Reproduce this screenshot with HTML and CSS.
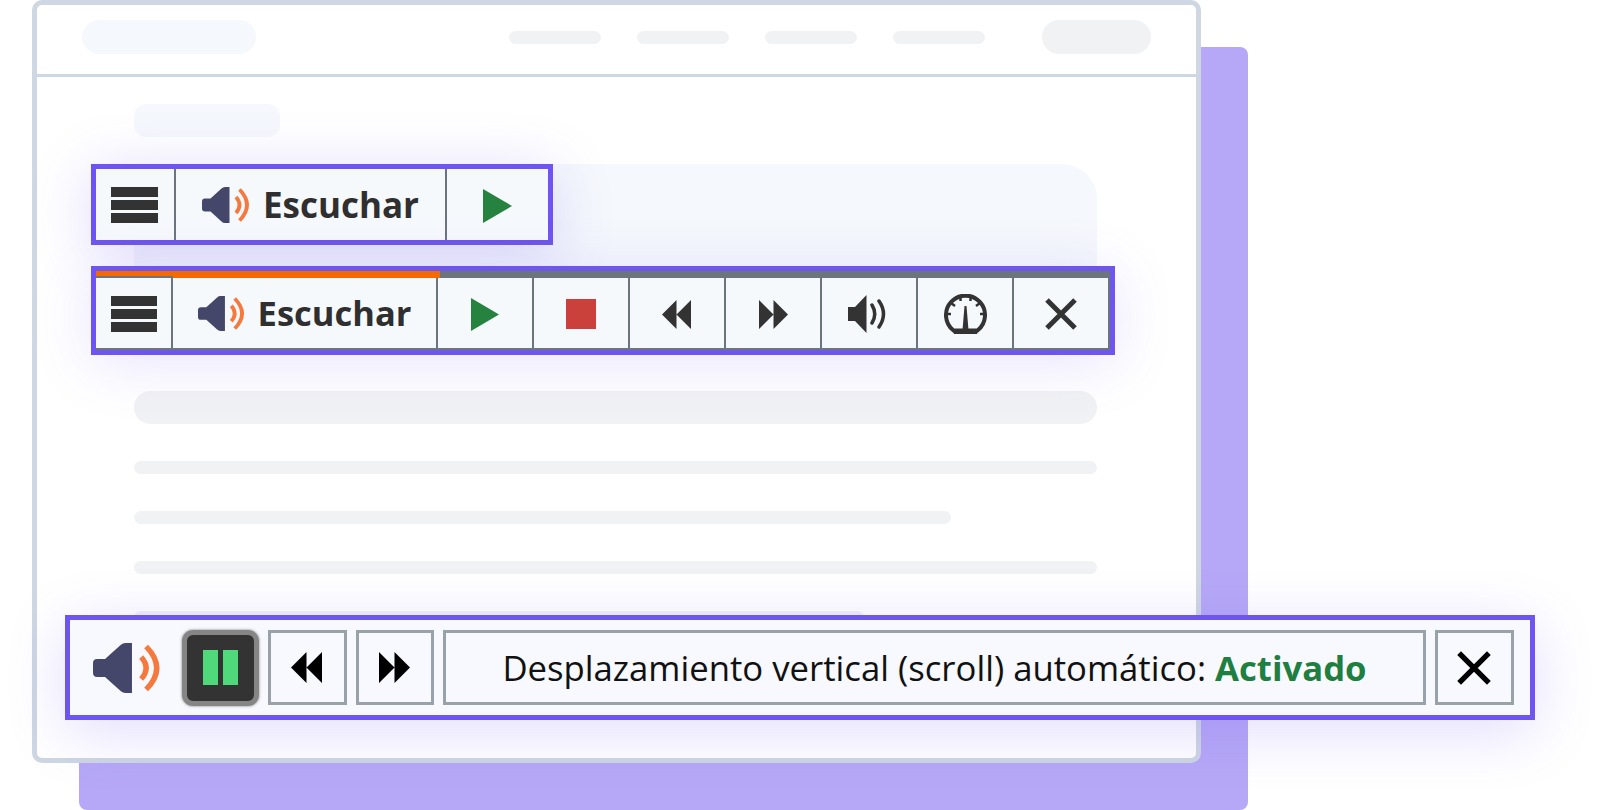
FILE: index.html
```html
<!DOCTYPE html>
<html lang="es">
<head>
<meta charset="utf-8">
<title>Escuchar</title>
<link rel="stylesheet" href="styles.css">
</head>
<body>
<svg class="defs" aria-hidden="true">
  <symbol id="i-menu" viewBox="0 0 47 36" preserveAspectRatio="none">
    <rect x="0" y="0" width="47" height="10"/><rect x="0" y="13" width="47" height="10"/><rect x="0" y="26" width="47" height="10"/>
  </symbol>
  <symbol id="i-speaker" viewBox="0 0 48 36" preserveAspectRatio="none">
    <path fill="#44466a" d="M3 11.500H8.500L19.500 1.500Q21 0 23 0H27.500V36H23Q21 36 19.500 34.500L8.500 24.500H3Q0 24.500 0 21.500V14.500Q0 11.500 3 11.500Z"/>
    <path fill="none" stroke="#f5793f" stroke-width="3.800" d="M34 10Q41 18 34 26M37.500 2.500Q52.500 18 37.500 33.500"/>
  </symbol>
  <symbol id="i-play" viewBox="0 0 29 34" preserveAspectRatio="none"><path fill="#25823f" d="M0 0L29 17L0 34Z"/></symbol>
  <symbol id="i-rew" viewBox="0 0 28 29" preserveAspectRatio="none"><path d="M14 0V29L0 14.500ZM28 0V29L14 14.500Z"/></symbol>
  <symbol id="i-fwd" viewBox="0 0 28 29" preserveAspectRatio="none"><path d="M0 0V29L14 14.500ZM14 0V29L28 14.500Z"/></symbol>
  <symbol id="i-vol" viewBox="0 0 38 38">
    <path fill="#333" d="M0 12H7L18.500 0V38L7 26H0Z"/>
    <path fill="none" stroke="#333" stroke-width="3.500" stroke-linecap="round" d="M24 10Q29.500 19 24 28M31 6Q40 19 31 32"/>
  </symbol>
  <symbol id="i-gauge" viewBox="0 0 43 40">
    <path fill="none" stroke="#333" stroke-width="4" d="M9.500 36.500A19.500 19.500 0 1 1 33.500 36.500Z"/>
    <path fill="#333" d="M20.500 12H22.500L24.500 36H18.500ZM8 35H35L33 40H10Z"/>
    <path fill="none" stroke="#333" stroke-width="2.500" d="M16.500 2V7M26.500 2V7M7 9L11 12M36 9L32 12M2.500 20H7M40.500 20H36"/>
  </symbol>
  <symbol id="i-close" viewBox="0 0 32 32"><path fill="none" stroke="currentColor" stroke-width="5" d="M2 2L30 30M30 2L2 30"/></symbol>
</svg>

<main class="stage">
  <div class="backdrop"></div>

  <section class="window">
    <header class="win-head">
      <div class="sk sk-logo"></div>
      <nav class="win-nav">
        <div class="sk sk-link"></div>
        <div class="sk sk-link"></div>
        <div class="sk sk-link"></div>
        <div class="sk sk-link"></div>
      </nav>
      <div class="sk sk-cta"></div>
    </header>
    <div class="win-body">
      <div class="sk sk-eyebrow"></div>
      <div class="sk sk-hero"></div>
      <div class="sk sk-title"></div>
      <div class="sk sk-line"></div>
      <div class="sk sk-line sk-w1"></div>
      <div class="sk sk-line"></div>
      <div class="sk sk-line sk-w2"></div>
    </div>
  </section>

  <div class="bar bar-a">
    <div class="cell cell-menu-a"><svg class="ic-menu"><use href="#i-menu"/></svg></div>
    <div class="cell cell-listen-a"><svg class="ic-speak"><use href="#i-speaker"/></svg><span class="listen listen-a">Escuchar</span></div>
    <div class="cell cell-last"><svg class="ic-play"><use href="#i-play"/></svg></div>
  </div>

  <div class="bar bar-b">
    <div class="progress"><div class="progress-fill"></div></div>
    <div class="cells">
      <div class="cell cell-menu-b"><svg class="ic-menu-b"><use href="#i-menu"/></svg></div>
      <div class="cell cell-listen-b"><svg class="ic-speak-b"><use href="#i-speaker"/></svg><span class="listen listen-b">Escuchar</span></div>
      <div class="cell cell-std"><svg class="ic-play-b"><use href="#i-play"/></svg></div>
      <div class="cell cell-std"><div class="stop"></div></div>
      <div class="cell cell-std"><svg class="ic-skip ic-skip-l"><use href="#i-rew"/></svg></div>
      <div class="cell cell-std"><svg class="ic-skip"><use href="#i-fwd"/></svg></div>
      <div class="cell cell-std"><svg class="ic-vol"><use href="#i-vol"/></svg></div>
      <div class="cell cell-std"><svg class="ic-gauge"><use href="#i-gauge"/></svg></div>
      <div class="cell cell-std"><svg class="ic-close"><use href="#i-close"/></svg></div>
    </div>
  </div>

  <div class="bar bar-c">
    <svg class="ic-speak-c"><use href="#i-speaker"/></svg>
    <div class="pause"><span class="pause-bar"></span><span class="pause-bar"></span></div>
    <div class="box box-sq"><svg class="ic-skip-c ic-skip-cl"><use href="#i-rew"/></svg></div>
    <div class="box box-sq"><svg class="ic-skip-c"><use href="#i-fwd"/></svg></div>
    <div class="box box-msg"><span>Desplazamiento vertical (scroll) automático: <strong class="on">Activado</strong></span></div>
    <div class="box box-end"><svg class="ic-close-c"><use href="#i-close"/></svg></div>
  </div>
</main>
</body>
</html>
```

FILE: styles.css
```css
* { box-sizing: border-box; }
html, body { margin: 0; padding: 0; background: #fff; }
body { font-family: "Open Sans", "Liberation Sans", sans-serif; }
.defs { display: none; }
svg { display: block; flex: none; }

.stage { position: relative; width: 1600px; height: 810px; overflow: hidden; }

.backdrop {
  position: absolute; left: 79px; top: 47px; width: 1169px; height: 763px;
  background: #b6a8f6; border-radius: 8px;
}

.window {
  position: absolute; left: 32px; top: 0; width: 1169px; height: 763px;
  background: #fff; border: 5px solid #ced7e2; border-radius: 10px;
}

.win-head {
  display: flex; align-items: center; height: 72px;
  padding: 0 45px 5px; border-bottom: 3px solid #ced7e2;
}
.win-nav { display: flex; gap: 36px; margin-left: auto; margin-right: 57px; }
.sk { background: #f1f2f4; }
.sk-logo { width: 174px; height: 34px; border-radius: 17px; background: #f5f8fc; }
.sk-link { width: 92px; height: 13px; border-radius: 7px; }
.sk-cta { width: 109px; height: 34px; border-radius: 17px; }

.win-body { display: flex; flex-direction: column; padding: 27px 99px 0 97px; }
.sk-eyebrow { width: 146px; height: 33px; border-radius: 12px; background: #f5f8fc; }
.sk-hero { height: 180px; margin-top: 27px; border-radius: 35px; background: #f5f8fc; }
.sk-title { height: 33px; margin-top: 47px; border-radius: 17px; }
.sk-line { height: 13px; margin-top: 37px; border-radius: 7px; }
.sk-w1 { width: 817px; }
.sk-w2 { width: 730px; }

.bar {
  position: absolute; display: flex;
  border: 5px solid #6f55ef; background: #f6f9fc;
}
.bar-a { left: 91px; top: 164px; width: 462px; height: 81px; box-shadow: 0 8px 60px rgba(111, 85, 239, .22); }
.bar-b { left: 91px; top: 266px; width: 1024px; height: 89px; flex-direction: column; box-shadow: 0 8px 60px rgba(111, 85, 239, .16); }
.bar-c {
  left: 65px; top: 615px; width: 1470px; height: 105px;
  align-items: center; gap: 9px; padding: 0 16px 0 23px;
  background: #f8f9fe; box-shadow: 0 12px 60px rgba(111, 85, 239, .2);
}

.cell { display: flex; align-items: center; justify-content: center; border-right: 2px solid #6c757d; }
.cell-menu-a { width: 80px; }
.cell-listen-a { width: 271px; gap: 13px; }
.cell-last { flex: 1; border-right: 0; padding-top: 2px; }

.listen { font-weight: 700; color: #2f2f2f; white-space: nowrap; }
.listen-a { font-size: 35px; line-height: 1; }
.listen-b { font-size: 34.500px; line-height: 1; }

.ic-menu { width: 47px; height: 36px; fill: #333; margin-left: -1px; }
.ic-menu-b { width: 46px; height: 36px; fill: #333; }
.ic-speak { width: 48px; height: 36px; }
.ic-speak-b { width: 47px; height: 35px; }
.ic-play { width: 29px; height: 34px; margin-right: 1px; }
.ic-play-b { width: 28px; height: 33px; }

.progress { height: 7px; background: #6c757d; flex: none; }
.progress-fill { width: 344px; height: 100%; background: #f46a00; }

.cells { display: flex; flex: 1; border-bottom: 2px solid #6c757d; }
.cell-menu-b { width: 77px; margin-top: -2px; padding-top: 2px; border-top: 2px solid #6c757d; }
.cell-listen-b { width: 265px; gap: 13px; }
.cell-std { width: 96px; padding-top: 2px; }

.stop { width: 30px; height: 30px; background: #c9413a; }
.ic-skip { width: 29px; height: 29px; fill: #333; }
.ic-skip-l { margin-right: 2px; }
.ic-vol { width: 38px; height: 38px; margin-right: 4px; }
.ic-gauge { width: 43px; height: 40px; }
.ic-close { width: 32px; height: 32px; color: #333; }

.ic-speak-c { width: 68px; height: 50px; margin-right: 12px; }

.pause {
  display: flex; align-items: center; justify-content: center; gap: 5px;
  width: 77px; height: 76px; background: #333; border: 5px solid #858585; border-radius: 11px;
  box-shadow: 0 0 2px 1px rgba(133, 133, 133, .5);
}
.pause-bar { width: 15px; height: 35px; background: #4fd97a; }

.box { display: flex; align-items: center; justify-content: center; height: 75px; border: 3px solid #98a2a8; }
.box-sq { width: 78.500px; }
.box-end { width: 79px; }
.box-msg { width: 983px; font-size: 34.700px; color: #111; white-space: nowrap; }
.on { font-weight: 700; color: #1f7f41; }
.ic-skip-c { width: 31px; height: 31px; fill: #000; }
.ic-skip-cl { margin-right: 2px; }
.ic-close-c { width: 34px; height: 34px; color: #000; margin-right: 2px; }
```
